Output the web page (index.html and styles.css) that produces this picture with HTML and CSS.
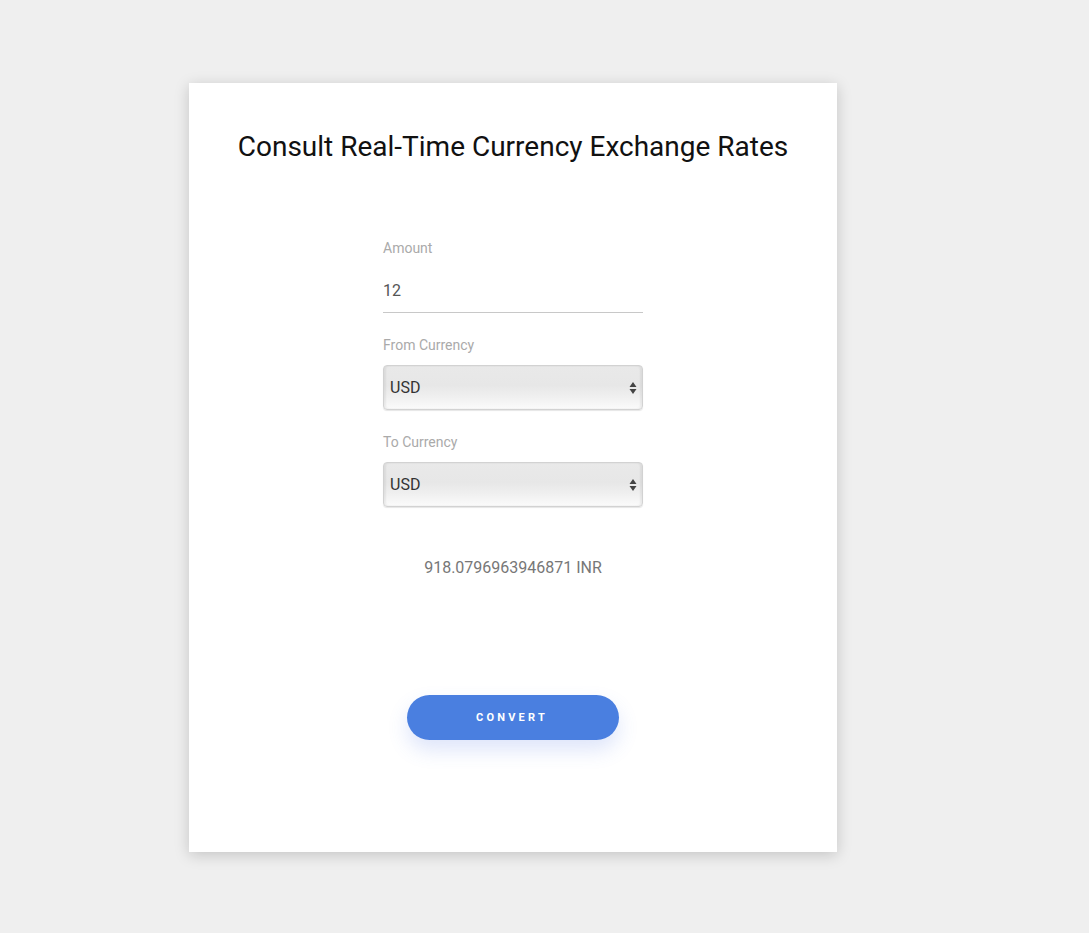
FILE: index.html
```html
<!DOCTYPE html>
<html lang="en">
<head>
<meta charset="utf-8">
<title>Currency Converter</title>
<link rel="stylesheet" href="styles.css">
</head>
<body>
<main class="card">
  <h1 class="title">Consult Real-Time Currency Exchange Rates</h1>
  <form class="form">
    <label class="label" for="amount">Amount</label>
    <input class="text-input" id="amount" type="text" value="12">
    <label class="label label-select" for="from">From Currency</label>
    <div class="select">
      <span class="select-value">USD</span>
      <svg class="select-arrows" width="8" height="14" viewBox="0 0 8 14"><path d="M4 1 L7.5 6 H0.5 Z M4 13 L7.5 8 H0.5 Z" fill="#444"/></svg>
    </div>
    <label class="label label-select" for="to">To Currency</label>
    <div class="select">
      <span class="select-value">USD</span>
      <svg class="select-arrows" width="8" height="14" viewBox="0 0 8 14"><path d="M4 1 L7.5 6 H0.5 Z M4 13 L7.5 8 H0.5 Z" fill="#444"/></svg>
    </div>
  </form>
  <p class="result">918.0796963946871 INR</p>
  <button class="convert" type="button">CONVERT</button>
</main>
</body>
</html>
```
FILE: styles.css
```css
* { box-sizing: border-box; }
html, body { margin: 0; padding: 0; }
body {
  background: #efefef;
  font-family: Roboto, "Liberation Sans", Arial, sans-serif;
  min-height: 933px;
  padding-top: 83px;
  padding-left: 189px;
}
.card {
  width: 648px;
  height: 769px;
  background: #fff;
  box-shadow: 0 3px 14px rgba(0,0,0,0.18);
  display: flex;
  flex-direction: column;
  align-items: center;
  padding-top: 46px;
}
.title {
  margin: 0;
  font-size: 28px;
  font-weight: 400;
  color: #111;
  line-height: 36px;
}
.form {
  width: 260px;
  margin-top: 75px;
  display: flex;
  flex-direction: column;
}
.label {
  font-size: 14px;
  color: #aaa;
  line-height: 16px;
}
.label-select { margin-top: 24px; }
.text-input {
  border: none;
  border-bottom: 1px solid #c8c8c8;
  font-family: inherit;
  font-size: 16px;
  color: #555;
  padding: 25px 0 11px 0;
  outline: none;
  background: transparent;
  line-height: 20px;
}
.select {
  margin-top: 12px;
  height: 45px;
  border-radius: 4px;
  border: 1px solid #d2d2d2;
  background: linear-gradient(to bottom, #e9e9e9 0%, #e7e7e7 45%, #efefef 70%, #fbfbfb 100%);
  box-shadow: inset 2px 0 2px rgba(0,0,0,0.06), inset -2px 0 2px rgba(0,0,0,0.06), 0 1px 1px rgba(0,0,0,0.1);
  display: flex;
  align-items: center;
  justify-content: space-between;
  padding: 0 5px 0 6px;
}
.select-value {
  font-size: 16px;
  color: #333;
}
.select-arrows { display: block; }
.result {
  margin: 51px 0 0 0;
  font-size: 16px;
  color: #777;
  line-height: 20px;
}
.convert {
  margin-top: 117px;
  width: 212px;
  height: 45px;
  border: none;
  border-radius: 23px;
  background: #4a7fe0;
  color: #fff;
  font-family: inherit;
  font-size: 11px;
  font-weight: 700;
  letter-spacing: 3.2px;
  padding-left: 4px;
  box-shadow: 0 10px 20px rgba(74,110,230,0.18);
}
```
